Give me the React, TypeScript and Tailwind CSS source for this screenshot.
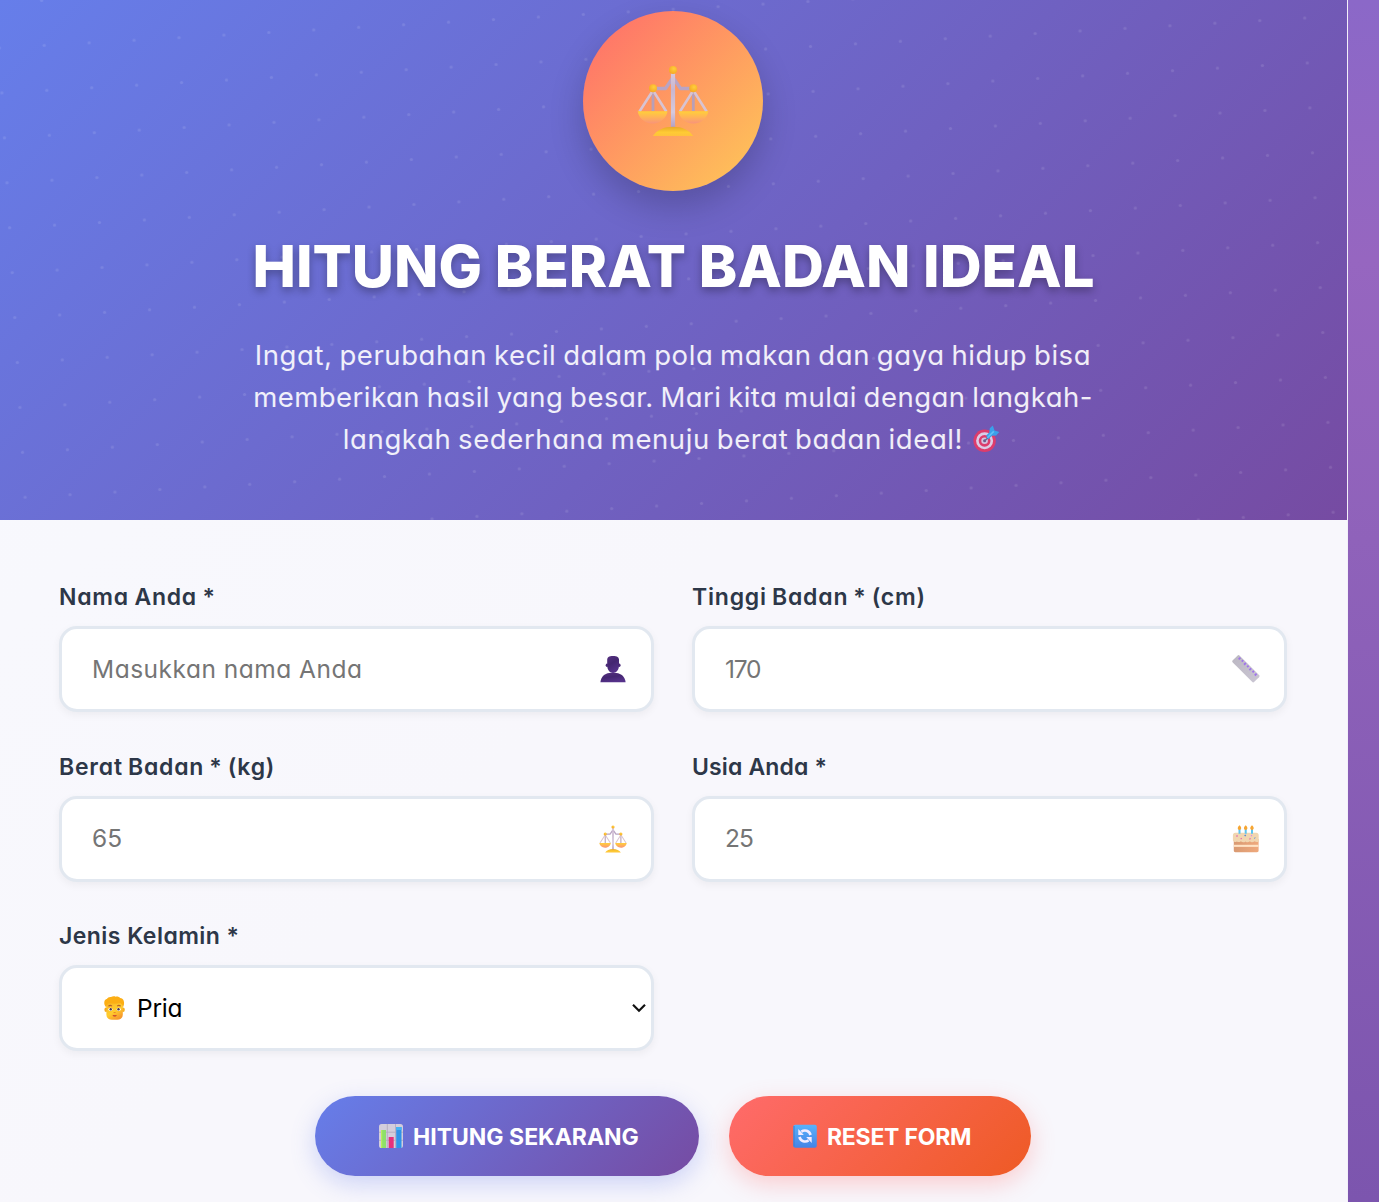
import React from 'react';

function ScaleIcon({ id, className }: { id: string; className: string }) {
  const metal = `url(#${id}-metal)`;
  const pan = `url(#${id}-pan)`;
  const ball = `url(#${id}-ball)`;
  return (
    <svg viewBox="0 0 72 72" className={className} fill="none">
      <defs>
        <linearGradient id={`${id}-metal`} gradientUnits="userSpaceOnUse" x1="0" y1="8" x2="0" y2="64">
          <stop offset="0" stopColor="#d8c8dc" />
          <stop offset="0.3" stopColor="#c9b6cf" />
          <stop offset="0.7" stopColor="#d6c9dc" />
          <stop offset="1" stopColor="#b09bc0" />
        </linearGradient>
        <linearGradient id={`${id}-pan`} x1="0" y1="0" x2="0" y2="1">
          <stop offset="0" stopColor="#ffcf3a" />
          <stop offset="0.5" stopColor="#ffb258" />
          <stop offset="1" stopColor="#f8947a" />
        </linearGradient>
        <linearGradient id={`${id}-base`} x1="0" y1="0" x2="0" y2="1">
          <stop offset="0" stopColor="#e8a828" />
          <stop offset="0.6" stopColor="#fecb34" />
          <stop offset="1" stopColor="#ffc23c" />
        </linearGradient>
        <radialGradient id={`${id}-ball`} cx="0.6" cy="0.35" r="0.7">
          <stop offset="0" stopColor="#ffcf3c" />
          <stop offset="1" stopColor="#f5a623" />
        </radialGradient>
      </defs>
      <path d="M16 23.5h12.5L36 12.5l7.500 11H56" stroke="#b9a4c4" strokeWidth="3.400" strokeLinejoin="round" />
      <path d="M16 26v20M56.300 26v20" stroke="#b79fb8" strokeWidth="2.800" />
      <path d="M15 27 2.500 46.500M17 27l12.300 19.500M55.300 27 43 46.500M57.300 27l12.300 19.500" stroke="#d8c3d2" strokeWidth="2.600" />
      <path d="M33.900 7h4.200v56h-4.200z" fill={metal} />
      <path d="M.7 46.300h29.800C29.500 53 24 58.500 15.600 58.500S1.700 53 .7 46.300zM41.500 46.300h29.800C70.300 53 64.800 58.500 56.400 58.500S42.500 53 41.500 46.300z" fill={pan} />
      <path d="M15.800 71c4-6 11-9.300 20.200-9.300S52.200 65 56.200 71z" fill={`url(#${id}-base)`} />
      <circle cx="36" cy="5" r="4" fill={ball} />
      <circle cx="16" cy="23.300" r="4" fill={ball} />
      <circle cx="56.300" cy="23.300" r="4" fill={ball} />
    </svg>
  );
}

function UserIcon() {
  return (
    <svg viewBox="0 0 28 28" className="h-7 w-7">
      <defs>
        <linearGradient id="user-body" x1="0" y1="0" x2="0.4" y2="1">
          <stop offset="0" stopColor="#553080" />
          <stop offset="0.5" stopColor="#442671" />
          <stop offset="1" stopColor="#55318a" />
        </linearGradient>
      </defs>
      <path d="M1.400 27.200c.4-5 4-8.800 9-9.200h7c5 .4 8.800 4.200 9.200 9.200z" fill="url(#user-body)" />
      <path d="M8.200 5C8.200 2.300 9.800 1 14 1s6 1.300 6 4v5.500c0 4.200-2.700 7.500-6 7.500s-5.800-3.300-5.800-7.500z" fill="url(#user-body)" />
      <ellipse cx="8" cy="10.300" rx="1.300" ry="1.800" fill="#4b2b78" />
      <ellipse cx="20.300" cy="10.300" rx="1.300" ry="1.800" fill="#4b2b78" />
    </svg>
  );
}

function RulerIcon() {
  return (
    <svg viewBox="0 0 28 28" className="h-7 w-7">
      <defs>
        <linearGradient id="ruler-body" x1="0" y1="0" x2="1" y2="0">
          <stop offset="0" stopColor="#bdb9c4" />
          <stop offset="1" stopColor="#c9c5d2" />
        </linearGradient>
      </defs>
      <g transform="rotate(45 14 14)">
        <rect x="-1.500" y="9" width="30.500" height="9.800" rx="1.600" fill="url(#ruler-body)" />
        <path d="M2 9.800v2.600M5.800 9.800v2M9.600 9.800v2.600M13.400 9.800v2M17.200 9.800v2.600M21 9.800v2M24.800 9.800v2.600" stroke="#a074ec" strokeWidth="1.800" />
      </g>
    </svg>
  );
}

function CakeIcon() {
  return (
    <svg viewBox="0 0 28 28" className="h-7 w-7">
      <defs>
        <linearGradient id="cake-body" x1="0" y1="0" x2="1" y2="0">
          <stop offset="0" stopColor="#d99a72" />
          <stop offset="1" stopColor="#efa97c" />
        </linearGradient>
      </defs>
      <path d="M1.800 14h24.800v11.500c0 1-.6 1.700-1.600 1.700H3.400c-1 0-1.600-.7-1.600-1.700z" fill="url(#cake-body)" />
      <path d="M1.800 19.800h24.800v2.100H1.800z" fill="#ffe3c4" />
      <path d="M.9 10.200c0-1.500 1-2.400 2.400-2.400h21c1.500 0 2.400.9 2.400 2.400v6.200c-1.800 1.300-3.200.2-4.200-.2-1.600 1.500-3.400 1.400-4.600 0-1.500 1.500-3.200 1.400-4.300.2-1.500 1.200-3.400 1.200-4.700-.2-1.500 1.200-3 1-4 .2-1.500.8-3.300.8-4-.8z" fill="#f1d6b0" />
      <path d="M7.500 3.800v5M13.700 3.800v5M20 3.800v5" stroke="#5cc4f0" strokeWidth="2" />
      <path d="M7.500.3c2.300 1.700 2.300 4.600 0 4.600s-2.300-2.900 0-4.600zM13.700.3c2.300 1.700 2.300 4.600 0 4.600s-2.300-2.900 0-4.600zM20 .3c2.300 1.700 2.300 4.600 0 4.600s-2.300-2.900 0-4.600z" fill="#f7a531" />
      <path d="m4.500 10.500 1 1M17.500 13.500l1 .6M8.800 13.200l.8.800" stroke="#e566b0" strokeWidth="1.500" />
      <path d="m12.700 10 1 1M22.500 12.700l.6.600" stroke="#4e86d9" strokeWidth="1.500" />
      <path d="m19 10.300 1 .5" stroke="#d18cf0" strokeWidth="1.500" />
    </svg>
  );
}

function ManIcon() {
  return (
    <svg viewBox="0 0 24 26" className="h-[26px] w-6">
      <defs>
        <linearGradient id="man-face" x1="0" y1="0" x2="0.6" y2="1">
          <stop offset="0" stopColor="#f9b224" />
          <stop offset="0.6" stopColor="#ffcd2e" />
          <stop offset="1" stopColor="#f79a2c" />
        </linearGradient>
      </defs>
      <ellipse cx="3" cy="14.800" rx="1.600" ry="2.200" fill="#f5a81f" />
      <ellipse cx="20.200" cy="14.800" rx="1.600" ry="2.200" fill="#f5b021" />
      <path d="M3.400 7h16.400v12.800c0 3.200-2.400 5-5.400 5H8.800c-3 0-5.400-1.800-5.400-5z" fill="url(#man-face)" />
      <path d="M3.400 12.500C1.800 11 1 9 1.300 7c.2-1.700 1.300-2.700 2.500-2.900C4.700 2.500 6.500 1.700 8 2.100c1.500-1 3.500-1 4.600-.4 1.700-.5 3.600 0 4.500 1.300 1.700.2 3 1.200 3.500 2.500.9 2.300.5 5-.8 7-.3-2.200-1.200-3.800-2.600-4.400-3.400.8-7.500.8-11.200 0-1.500.7-2.400 2.300-2.600 4.400z" fill="#fcae14" />
      <path d="M5.500 11.200c.9-.8 2.500-.8 3.400-.1M14.200 11.100c.9-.7 2.500-.7 3.400.1" stroke="#b9612a" strokeWidth="1.200" fill="none" />
      <ellipse cx="7.400" cy="14.300" rx="2" ry="1.600" fill="#fff" />
      <ellipse cx="15.800" cy="14.300" rx="2" ry="1.600" fill="#fff" />
      <circle cx="7.700" cy="14.300" r="1.200" fill="#4a3550" />
      <circle cx="15.500" cy="14.300" r="1.200" fill="#4a3550" />
      <path d="M10.600 17.500h2" stroke="#ee8a24" strokeWidth="1" />
      <path d="M9.600 20c1.300.3 2.800.3 4.100 0-.2 1-1 1.500-2 1.500s-1.900-.5-2.100-1.500z" fill="#c4352f" />
    </svg>
  );
}

function ChartIcon() {
  return (
    <svg viewBox="0 0 24 24" className="h-6 w-6">
      <rect width="24" height="24" rx="2.600" fill="#d3cddc" />
      <path d="M0 8.200h24M0 16.300h24M8.300 0v24M16.500 0v24" stroke="#b3abc0" strokeWidth="0.900" />
      <path d="M2 6h5v18H2z" fill="#8ee06a" />
      <path d="M2 6h1.200v18H2z" fill="#b8ee5e" />
      <path d="M9.700 13h5v11h-5z" fill="#e5307c" />
      <path d="M17.200 3h5.300v21h-5.300z" fill="#2f93ea" />
      <path d="M17.200 3h5.300v3h-5.300z" fill="#45b4f5" />
    </svg>
  );
}

function RefreshIcon() {
  return (
    <svg viewBox="0 0 24 24" className="h-6 w-6">
      <defs>
        <linearGradient id="refresh-bg" x1="0" y1="0" x2="0" y2="1">
          <stop offset="0" stopColor="#58b2fb" />
          <stop offset="1" stopColor="#4583e6" />
        </linearGradient>
      </defs>
      <rect x=".3" y=".8" width="23.500" height="22.900" rx="2" fill="url(#refresh-bg)" />
      <path d="M1 2v20.500" stroke="#3c7fd0" strokeWidth="1" />
      <path d="M8.400 7.600c3.300-2.200 7.800-1 9.200 3.400M15.600 16.400c-3.300 2.200-7.800 1-9.200-3.400" stroke="#f3ecff" strokeWidth="2.600" fill="none" />
      <path d="M5.300 5v6h5.500zM18.700 19v-6h-5.500z" fill="#f3ecff" />
    </svg>
  );
}

function TargetIcon() {
  return (
    <svg viewBox="0 0 28 28" className="h-7 w-7">
      <circle cx="12.600" cy="15.800" r="11.200" fill="#dc3c6c" />
      <circle cx="12.600" cy="15.800" r="8.500" fill="#dccbe6" />
      <circle cx="12.600" cy="15.800" r="5.900" fill="#dc3c6c" />
      <circle cx="12.600" cy="15.800" r="3.300" fill="#d3c3e0" />
      <circle cx="12.600" cy="15.800" r="1.500" fill="#6e5a8c" />
      <path d="m13 15.500 5-4.500" stroke="#5d6e98" strokeWidth="1.600" />
      <path d="m14 10.800 3.300-3.400.5-4.100L20.800.6l1.700 4.900 4.800 1.500-3.200 3.400-4.100.4-3.600 3.500z" fill="#3aa0ea" />
      <path d="m15.300 12.700 6.500-6.300" stroke="#63bff5" strokeWidth="1.600" />
    </svg>
  );
}

function Dots() {
  return (
    <svg className="absolute inset-0 h-full w-full">
      <defs>
        <pattern
          id="dots"
          width="45"
          height="45"
          patternUnits="userSpaceOnUse"
          patternTransform="translate(44.200 45.400) rotate(-3.290) translate(-22.500 -22.500)"
        >
          <circle cx="22.500" cy="22.500" r="1.600" fill="#fff" fillOpacity="0.110" />
        </pattern>
      </defs>
      <rect width="100%" height="100%" fill="url(#dots)" />
    </svg>
  );
}

const box =
  'flex h-[86px] w-full items-center rounded-[18px] border-[3px] border-[#e2e8f0] bg-white shadow-[0_3px_8px_rgba(0,0,0,0.05)]';

type FieldProps = {
  label: string;
  labelClass: string;
  placeholder: string;
  inputClass: string;
  icon: React.ReactNode;
};

function Field({ label, labelClass, placeholder, inputClass, icon }: FieldProps) {
  return (
    <label className="flex flex-col gap-3">
      <span className={`h-[34px] whitespace-nowrap text-[23px] leading-[34px] font-semibold text-[#2d3748] ${labelClass}`}>{label}</span>
      <span className={`${box} pr-6 pl-[30px]`}>
        <input
          placeholder={placeholder}
          className={`min-w-0 flex-1 bg-transparent text-[24.5px] text-[#2d3748] outline-none placeholder:text-[#757575] ${inputClass}`}
        />
        {icon}
      </span>
    </label>
  );
}

export default function App() {
  return (
    <div className="flex h-[1202px] w-full overflow-hidden bg-[linear-gradient(180deg,#8b68c8_0,#9666c0_260px,#8f62ba_540px,#7c55ae_1202px)] font-['Inter',sans-serif] [font-feature-settings:'cv11']">
      <main className="flex w-[1348px] flex-col border-r border-[#f3f0fa] bg-[linear-gradient(135deg,#f8f9fe_0%,#f8f7fc_50%,#f8f7fc_100%)]">
        <header className="relative h-[520px] shrink-0 bg-[linear-gradient(135deg,#667eea_0%,#764ba2_100%)]">
          <Dots />
          <div className="relative flex flex-col items-center pt-[11px] pr-px">
            <div className="flex h-[180px] w-[180px] items-center justify-center rounded-full bg-[linear-gradient(135deg,#ff6b6b,#feca57)] shadow-[0_15px_35px_rgba(0,0,0,0.2)]">
              <ScaleIcon id="hero" className="h-[72px] w-[72px]" />
            </div>
            <h1 className="mt-[39px] h-[72px] whitespace-nowrap pl-px text-[58px] leading-[72px] font-extrabold tracking-[0.03px] text-white [text-shadow:0_4px_8px_rgba(0,0,0,0.3)]">
              HITUNG BERAT BADAN IDEAL
            </h1>
            <p className="mt-8 flex flex-col items-center whitespace-nowrap text-[27.5px] leading-[42px] text-white/90 [word-spacing:-1.500px]">
              <span className="tracking-[0.58px]">Ingat, perubahan kecil dalam pola makan dan gaya hidup bisa</span>
              <span className="tracking-[0.47px]">memberikan hasil yang besar. Mari kita mulai dengan langkah-</span>
              <span className="flex h-[42px] items-center gap-[9px] pr-[3px] tracking-[0.6px]">
                langkah sederhana menuju berat badan ideal!
                <TargetIcon />
              </span>
            </p>
          </div>
        </header>

        <form className="flex flex-col pt-[60px]" onSubmit={(e) => e.preventDefault()}>
          <div className="grid grid-cols-2 gap-x-[38px] gap-y-[37.5px] pr-[60px] pl-[59px]">
            <Field label="Nama Anda *" labelClass="tracking-[0.75px] [word-spacing:-1px]" placeholder="Masukkan nama Anda" inputClass="tracking-[0.5px]" icon={<UserIcon />} />
            <Field label="Tinggi Badan * (cm)" labelClass="tracking-[0.8px] [word-spacing:-1.500px]" placeholder="170" inputClass="tracking-[-1.2px]" icon={<RulerIcon />} />
            <Field label="Berat Badan * (kg)" labelClass="tracking-[0.8px] [word-spacing:-1.500px]" placeholder="65" inputClass="tracking-normal" icon={<ScaleIcon id="weight" className="h-7 w-7" />} />
            <Field label="Usia Anda *" labelClass="tracking-[0.15px]" placeholder="25" inputClass="tracking-[-0.9px]" icon={<CakeIcon />} />
            <div className="flex flex-col gap-3">
              <span className="h-[34px] text-[23px] leading-[34px] font-semibold tracking-[0.45px] text-[#2d3748]">Jenis Kelamin *</span>
              <button type="button" className={`${box} pr-1 pl-[41px]`}>
                <ManIcon />
                <span className="ml-[10px] flex-1 text-left text-[24.5px] tracking-[-0.2px] text-black">Pria</span>
                <svg viewBox="0 0 16 10" className="h-[10px] w-4" fill="none" stroke="#111" strokeWidth="2.200">
                  <path d="m2 1.800 6 6 6-6" />
                </svg>
              </button>
            </div>
          </div>

          <div className="mt-[45px] flex gap-[30px] pl-[315px]">
            <button type="submit" className="flex h-20 w-[384px] items-center rounded-full bg-[linear-gradient(135deg,#667eea_0%,#764ba2_100%)] pl-16 text-[23px] font-bold whitespace-nowrap text-white shadow-[0_8px_25px_rgba(102,126,234,0.3)]">
              <ChartIcon />
              <span className="ml-[10px] pt-[2px]">HITUNG SEKARANG</span>
            </button>
            <button type="reset" className="flex h-20 w-[302px] items-center rounded-full bg-[linear-gradient(135deg,#ff6b6b_0%,#ee5a24_100%)] pl-16 text-[23px] font-bold whitespace-nowrap text-white shadow-[0_8px_25px_rgba(255,107,107,0.3)]">
              <RefreshIcon />
              <span className="ml-[10px] pt-[2px] tracking-[-0.25px]">RESET FORM</span>
            </button>
          </div>
        </form>
      </main>
    </div>
  );
}
